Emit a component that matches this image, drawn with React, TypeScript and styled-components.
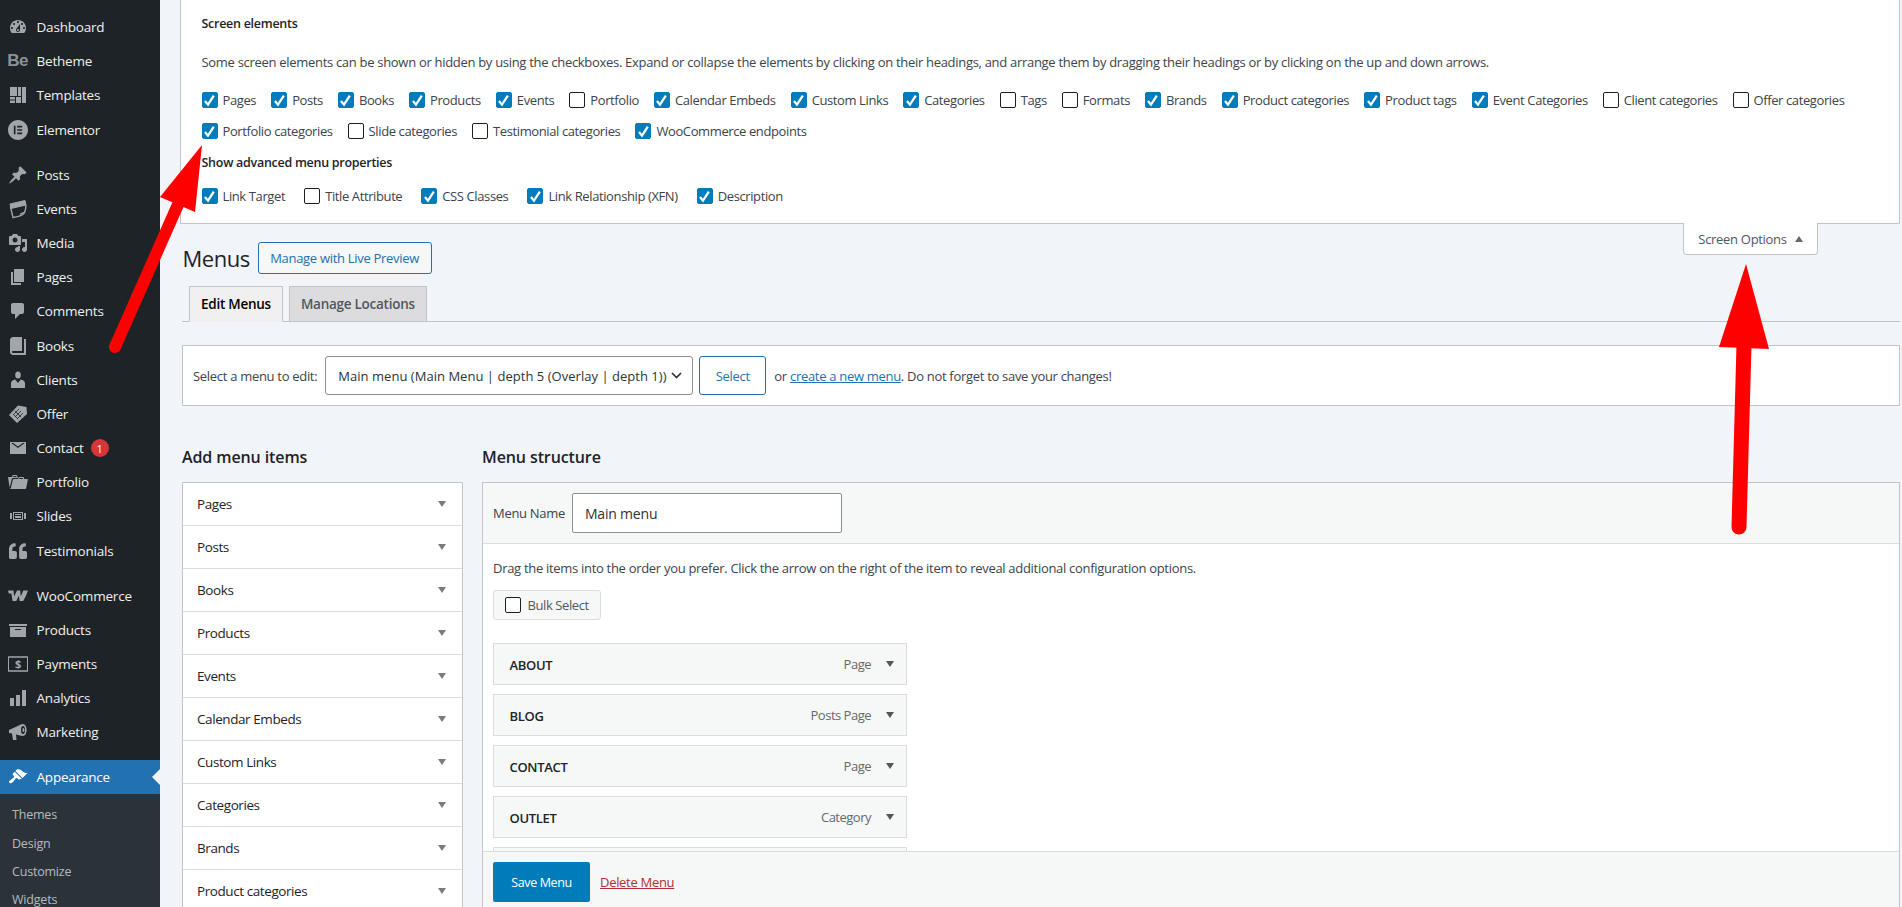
import React from 'react';
import styled, { createGlobalStyle } from 'styled-components';
import { FaQuoteLeft } from 'react-icons/fa';
import { SiElementor } from 'react-icons/si';

const Global = createGlobalStyle`
  html, body { margin: 0; padding: 0; height: 100%; overflow: hidden; }
  body { font-family: "Open Sans", "Noto Sans", sans-serif; font-size: 13px; color: #3c434a; background: #f1f4f8; }
  * { box-sizing: border-box; }
`;

const Page = styled.div`
  position: relative;
  display: flex;
  width: 1902px;
  height: 907px;
  overflow: hidden;
  background: #f1f4f8;
`;

const Sidebar = styled.nav`
  flex: 0 0 160px;
  width: 160px;
  background: #1d2327;
  padding-top: 10px;
  overflow: hidden;
`;

const Group = styled.div`
  margin-bottom: 10.75px;
`;

const MenuRow = styled.div<{ $active?: boolean }>`
  position: relative;
  display: flex;
  align-items: center;
  height: 34.2px;
  padding-left: 8px;
  font-size: 13.5px;
  letter-spacing: -0.2px;
  color: ${p => (p.$active ? '#fff' : '#f0f0f1')};
  background: ${p => (p.$active ? '#2271b1' : 'transparent')};
`;

const MenuIcon = styled.span<{ $active?: boolean }>`
  flex: 0 0 20px;
  width: 20px;
  height: 20px;
  margin-right: 8.5px;
  display: flex;
  align-items: center;
  justify-content: center;
  color: ${p => (p.$active ? '#fff' : '#a2a6ab')};
  svg { display: block; }
`;

const BeMark = styled.span`
  font-family: "Liberation Sans", Arial, sans-serif;
  font-weight: 700;
  font-size: 17px;
  letter-spacing: -0.6px;
  color: #8d9298;
  margin-left: -1px;
`;

const Badge = styled.span`
  display: inline-flex;
  align-items: center;
  justify-content: center;
  width: 18px;
  height: 18px;
  margin-left: 7px;
  border-radius: 50%;
  background: #d63638;
  color: #fff;
  font-size: 11px;
  letter-spacing: 0;
`;

const Notch = styled.span`
  position: absolute;
  right: 0;
  top: 50%;
  margin-top: -8px;
  border: 8px solid transparent;
  border-right-color: #f1f4f8;
  border-left-width: 0;
`;

const Submenu = styled.div`
  background: #2c3338;
  padding-top: 7px;
  height: 140px;
`;

const SubRow = styled.div`
  height: 28.3px;
  line-height: 28.3px;
  padding-left: 12px;
  font-size: 12.5px;
  letter-spacing: -0.2px;
  color: rgba(240, 246, 252, 0.7);
`;

const Main = styled.main`
  flex: 1;
  min-width: 0;
  padding: 0 2px 0 20px;
  font-size: 13px;
  letter-spacing: -0.3px;
`;

const OptionsPanel = styled.section`
  height: 224px;
  background: #fff;
  border: 1px solid #c3c4c7;
  border-top: 0;
  padding: 14px 20px 0 20.5px;
`;

const PanelHeading = styled.h5<{ $top?: number }>`
  margin: ${p => p.$top ?? 0}px 0 0;
  font-size: 12.5px;
  line-height: 20px;
  font-weight: 600;
  letter-spacing: -0.27px;
  color: #1d2327;
`;

const PanelText = styled.p`
  margin: 18px 0 0;
  line-height: 20px;
`;

const CheckRow = styled.div<{ $top: number; $gap: number }>`
  display: flex;
  align-items: center;
  gap: ${p => p.$gap}px;
  height: 20px;
  margin-top: ${p => p.$top}px;
  letter-spacing: -0.39px;
`;

const CheckItem = styled.label`
  display: flex;
  align-items: center;
  gap: 5px;
  white-space: nowrap;
`;

const Box = styled.span<{ $on?: boolean }>`
  flex: 0 0 16px;
  width: 16px;
  height: 16px;
  border-radius: 2px;
  display: flex;
  align-items: center;
  justify-content: center;
  background: ${p => (p.$on ? '#007cba' : '#fff')};
  border: 1px solid ${p => (p.$on ? '#007cba' : '#1e1e1e')};
`;

const ScreenLinks = styled.div`
  height: 0;
  display: flex;
  justify-content: flex-end;
  padding-right: 82px;
`;

const ScreenTab = styled.button`
  height: 32px;
  width: 135px;
  margin-top: -1px;
  display: flex;
  align-items: center;
  justify-content: center;
  gap: 8px;
  background: #fff;
  border: 1px solid #c3c4c7;
  border-top: 0;
  border-radius: 0 0 4px 4px;
  font: inherit;
  letter-spacing: -0.3px;
  color: #50575e;
  position: relative;
  z-index: 1;
`;

const TriUp = styled.span`
  border-left: 4px solid transparent;
  border-right: 4px solid transparent;
  border-bottom: 6px solid #646970;
`;

const HeadRow = styled.div`
  display: flex;
  align-items: center;
  gap: 8px;
  margin-top: 18px;
  padding-left: 2.5px;
`;

const Title = styled.h1`
  margin: 0;
  font-size: 22px;
  font-weight: 400;
  line-height: 32px;
  letter-spacing: -0.5px;
  color: #1d2327;
`;

const OutlineButton = styled.button<{ $w: number; $h: number; $white?: boolean }>`
  width: ${p => p.$w}px;
  height: ${p => p.$h}px;
  padding: 0;
  background: ${p => (p.$white ? '#fff' : '#f6f7f7')};
  border: 1px solid #2271b1;
  border-radius: 3px;
  color: #2271b1;
  font: inherit;
  letter-spacing: -0.3px;
`;

const Content = styled.div`
  margin-left: 2px;
`;

const TabBar = styled.div`
  display: flex;
  gap: 6px;
  height: 36px;
  margin-top: 12px;
  padding-left: 7px;
  border-bottom: 1px solid #c3c4c7;
`;

const Tab = styled.div<{ $active?: boolean }>`
  height: 36px;
  display: flex;
  align-items: center;
  padding: 0 11px;
  border: 1px solid #c3c4c7;
  border-bottom-color: ${p => (p.$active ? '#f0f0f1' : '#c3c4c7')};
  background: ${p => (p.$active ? '#f0f0f1' : '#dcdcde')};
  font-size: 13.5px;
  font-weight: 600;
  letter-spacing: -0.26px;
  color: ${p => (p.$active ? '#000' : '#50575e')};
`;

const SelectBar = styled.div`
  display: flex;
  align-items: center;
  height: 61px;
  margin-top: 23px;
  padding: 0 10px;
  background: #fff;
  border: 1px solid #c3c4c7;
`;

const FakeSelect = styled.div`
  width: 368px;
  height: 39px;
  margin: 0 6px 0 8px;
  padding: 0 10px 0 12px;
  display: flex;
  align-items: center;
  justify-content: space-between;
  background: #fff;
  border: 1px solid #8c8f94;
  border-radius: 3px;
  font-size: 13px;
  letter-spacing: 0.03px;
  color: #2c3338;
  white-space: nowrap;
`;

const BarNote = styled.span`
  margin-left: 8px;
`;

const Link = styled.a<{ $danger?: boolean }>`
  color: ${p => (p.$danger ? '#b32d2e' : '#2271b1')};
  text-decoration: underline;
`;

const Columns = styled.div`
  display: grid;
  grid-template-columns: 281px 1fr;
  column-gap: 19px;
  margin-top: 41px;
`;

const ColTitle = styled.h2`
  margin: 0 0 15px;
  height: 20px;
  font-size: 16px;
  line-height: 20px;
  font-weight: 600;
  letter-spacing: -0.1px;
  color: #1d2327;
`;

const Accordion = styled.div`
  background: #fff;
  border: 1px solid #c3c4c7;
  border-bottom: 0;
`;

const AccRow = styled.div`
  display: flex;
  align-items: center;
  justify-content: space-between;
  height: 43px;
  padding: 0 16px 0 14px;
  border-bottom: 1px solid #dcdcde;
  font-size: 13.5px;
  font-weight: 500;
  letter-spacing: -0.42px;
  color: #1d2327;
`;

const TriDown = styled.span<{ $dark?: boolean }>`
  border-left: 4px solid transparent;
  border-right: 4px solid transparent;
  border-top: 6px solid ${p => (p.$dark ? '#50575e' : '#787c82')};
`;

const MenuBox = styled.div`
  height: 430px;
  display: flex;
  flex-direction: column;
  background: #fff;
  border: 1px solid #c3c4c7;
  border-bottom: 0;
`;

const BoxHeader = styled.div`
  flex: 0 0 61px;
  display: flex;
  align-items: flex-start;
  padding: 10px 10px 0;
  gap: 7px;
  background: #f6f7f7;
  border-bottom: 1px solid #dcdcde;
`;

const NameLabel = styled.span`
  line-height: 40px;
`;

const NameInput = styled.input`
  width: 270px;
  height: 40px;
  padding: 0 12px;
  background: #fff;
  border: 1px solid #8c8f94;
  border-radius: 2px;
  font: inherit;
  font-size: 14px;
  letter-spacing: -0.2px;
  color: #2c3338;
  outline: none;
`;

const BoxBody = styled.div`
  flex: 0 0 307px;
  height: 307px;
  overflow: hidden;
  padding: 14px 10px 0;
`;

const BodyText = styled.p`
  margin: 0;
  line-height: 20px;
`;

const BulkButton = styled.div`
  display: flex;
  align-items: center;
  gap: 7px;
  width: 108px;
  height: 30px;
  margin: 12px 0 23px;
  padding-left: 10.5px;
  background: #f6f7f7;
  border: 1px solid #dcdcde;
  border-radius: 3px;
  letter-spacing: -0.4px;
  color: #50575e;
`;

const ItemBar = styled.div`
  display: flex;
  align-items: center;
  width: 414px;
  height: 42px;
  margin-bottom: 9px;
  padding: 0 12px 0 15.5px;
  background: #f6f7f7;
  border: 1px solid #dcdcde;
`;

const ItemTitle = styled.span`
  flex: 1;
  font-weight: 600;
  padding-top: 2px;
  color: #1d2327;
`;

const ItemType = styled.span`
  margin-right: 15px;
  letter-spacing: -0.5px;
  color: #646970;
`;

const BoxFooter = styled.div`
  flex: 1;
  display: flex;
  align-items: flex-start;
  gap: 10px;
  padding: 10px 10px 0;
  background: #f6f7f7;
  border-top: 1px solid #dcdcde;
`;

const SaveButton = styled.button`
  width: 97px;
  height: 40px;
  padding: 0;
  background: #007cba;
  border: 0;
  border-radius: 2px;
  color: #fff;
  font: inherit;
  font-size: 12.5px;
  letter-spacing: -0.38px;
`;

const DeleteWrap = styled.span`
  line-height: 40px;
`;

const Overlay = styled.svg`
  position: absolute;
  inset: 0;
  pointer-events: none;
`;

const I = ({ d, s = 20 }: { d: string; s?: number }) => (
  <svg width={s} height={s} viewBox="0 0 20 20" fill="currentColor"><path d={d} /></svg>
);

const GaugeIcon = () => <I d="M3.76 16h12.48c1.1-1.37 1.76-3.11 1.76-5 0-4.42-3.58-8-8-8s-8 3.58-8 8c0 1.89.66 3.63 1.76 5zM10 4c.55 0 1 .45 1 1s-.45 1-1 1-1-.45-1-1 .45-1 1-1zM6 6c.55 0 1 .45 1 1s-.45 1-1 1-1-.45-1-1 .45-1 1-1zm8 0c.55 0 1 .45 1 1s-.45 1-1 1-1-.45-1-1 .45-1 1-1zm-5.37 5.55L12 7v6c0 1.1-.9 2-2 2s-2-.9-2-2c0-.57.24-1.08.63-1.45zM4 10c.55 0 1 .45 1 1s-.45 1-1 1-1-.45-1-1 .45-1 1-1zm12 0c.55 0 1 .45 1 1s-.45 1-1 1-1-.45-1-1 .45-1 1-1zm-5 3c0-.55-.45-1-1-1s-1 .45-1 1 .45 1 1 1 1-.45 1-1z" />;
const TemplatesIcon = () => <I d="M2 2h7v9H2zM10 2h3v9h-3zM14 2h4v16h-4zM2 12h5v2.5H2zM2 15.5h5V18H2zM8 12h5v6H8z" />;
const PinIcon = () => <I d="M10.44 3.02l1.82-1.82 6.36 6.35-1.83 1.82c-1.05-.68-2.48-.57-3.41.36l-.75.75c-.92.93-1.04 2.35-.35 3.41l-1.83 1.82-2.41-2.41-2.8 2.79c-.42.42-3.38 2.71-3.8 2.29s1.86-3.39 2.28-3.81l2.79-2.79L4.1 9.36l1.83-1.82c1.05.69 2.48.57 3.4-.36l.75-.75c.93-.92 1.05-2.35.36-3.41z" />;
const EventsIcon = () => (
  <svg width="20" height="20" viewBox="0 0 20 20" fill="none" stroke="currentColor">
    <path d="M2 5 L17 1.5 L18 6 L3 9.5 Z" fill="currentColor" strokeWidth="1" />
    <path d="M2.5 8 L5 18.5 C9 18 13 17 15.5 15 C17 13.5 17.8 10 18 6" strokeWidth="1.4" />
    <path d="M12 15.5 C13 14.5 15 14 17 13" strokeWidth="1.2" />
  </svg>
);
const MediaIcon = () => <I d="M13 11V4c0-.55-.45-1-1-1h-1.67L9 1H5L3.67 3H2c-.55 0-1 .45-1 1v7c0 .55.45 1 1 1h10c.55 0 1-.45 1-1zM7 4.5c1.38 0 2.5 1.12 2.5 2.5S8.38 9.5 7 9.5 4.5 8.38 4.5 7 5.62 4.5 7 4.5zM14 6h5v10.5c0 1.38-1.12 2.5-2.5 2.5S14 17.88 14 16.5s1.12-2.5 2.5-2.5c.17 0 .34.02.5.05V9h-3V6zm-4 8.05V13h2v3.5c0 1.38-1.12 2.5-2.5 2.5S7 17.88 7 16.5 8.12 14 9.5 14c.17 0 .34.02.5.05z" />;
const PageIcon = () => <I d="M6 15V2h10v13H6zm-1 1h8v2H3V5h2v11z" />;
const CommentIcon = () => <I d="M5 2h9c1.1 0 2 .9 2 2v7c0 1.1-.9 2-2 2h-2l-5 5v-5H5c-1.1 0-2-.9-2-2V4c0-1.1.9-2 2-2z" />;
const BookIcon = () => <I d="M16 3h2v16H5c-1.66 0-3-1.34-3-3V4c0-1.66 1.34-3 3-3h9v14H5c-.55 0-1 .45-1 1s.45 1 1 1h11V3z" />;
const ClientIcon = () => (
  <svg width="20" height="20" viewBox="0 0 20 20" fill="currentColor">
    <ellipse cx="10" cy="5" rx="2.8" ry="3.6" />
    <path d="M3 18v-4.5C3 11 5 9.8 7.2 9.5L10 13l2.8-3.5c2.2.3 4.2 1.5 4.2 4V18z" />
  </svg>
);
const OfferIcon = () => (
  <svg width="20" height="20" viewBox="0 0 20 20">
    <path d="M1 11 L10 1.5 L18.5 3 L19 10 L9 19 Z" fill="currentColor" />
    <path d="M5 11 L11 5 M7 13 L13 7 M9 15 L15 9 M7 7 L13 13 M5 10 L10 15" stroke="#1d2327" strokeWidth="0.8" />
  </svg>
);
const MailIcon = () => <I d="M2 4h16v12H2zM3.2 5l6.8 5 6.8-5h-1.9L10 8.4 5.1 5z" />;
const FolderIcon = () => <I d="M4 5H.78c-.37 0-.74.32-.69.84l1.56 9.99S3.5 8.47 3.86 6.7c.11-.53.61-.7.98-.7H10s-.7-2.08-.77-2.31C9.11 3.25 8.89 3 8.45 3H5.14c-.36 0-.7.23-.8.64C4.25 4.04 4 5 4 5zm4.88 0h-4s.42-1 .87-1h2.13c.48 0 1 1 1 1zM2.67 16.25c-.31.47-.76.75-1.26.75h15.73c.54 0 .92-.31 1.03-.83.44-2.19 1.68-8.44 1.68-8.44.07-.5-.3-.73-.62-.73H16V5.53c0-.16-.26-.53-.66-.53h-3.76c-.52 0-.87.58-.87.58L10 7H5.59c-.32 0-.63.19-.69.5 0 0-1.59 6.7-1.72 7.33-.07.37-.22.99-.51 1.42zM15.01 7h-4l.37-.68s.26-.32.55-.32h2.42c.32 0 .66.5.66.5z" />;
const SlidesIcon = () => <I d="M5 14V6h10v8H5zm-3-1V7h2v6H2zm4-6v6h8V7H6zm10 0h2v6h-2V7zm-3 2V8H7v1h6zm0 3v-2H7v2h6z" />;
const WooIcon = () => (
  <svg width="20" height="20" viewBox="0 0 20 20" fill="currentColor">
    <path d="M0 4.5h5.5l.6 6 2.9-6h3.2l.5 6 2.6-6h4.7c-1.3 3.6-3.2 8-4.8 10.5h-3.6l-.7-5.3-2.6 5.3H4.6L3.4 7.5H0.8z" />
  </svg>
);
const ArchiveIcon = () => <I d="M19 4v2H1V4h18zM2 7h16v10H2V7zm11 3V9H7v1h6z" />;
const PaymentIcon = () => (
  <svg width="20" height="20" viewBox="0 0 20 20" fill="none">
    <rect x="0.2" y="3" width="19.6" height="14" rx="1" stroke="currentColor" strokeWidth="1.6" />
    <text x="10" y="14.4" textAnchor="middle" fontFamily="Open Sans" fontWeight="700" fontSize="11" fill="currentColor">$</text>
  </svg>
);
const BarsIcon = () => <I d="M18 18V2h-4v16h4zm-6 0V7H8v11h4zm-6 0v-8H2v8h4z" />;
const MegaIcon = () => (
  <svg width="20" height="20" viewBox="0 0 20 20">
    <path d="M1 8 L14 2 V14 L8 12.5 L8.5 18 H5 L4 11.5 L1 11 Z" fill="currentColor" />
    <ellipse cx="15" cy="8" rx="3.6" ry="6" fill="currentColor" />
    <ellipse cx="15" cy="8" rx="2" ry="4" fill="#1d2327" />
    <ellipse cx="15.4" cy="8" rx="1" ry="2" fill="currentColor" />
  </svg>
);
const BrushIcon = () => <I d="M14.48 11.06L7.41 3.99l1.5-1.5c.5-.56 2.3-.47 3.51.32 1.21.8 1.43 1.28 2.91 2.1 1.18.64 2.45 1.26 4.45.85zm-.71.71L6.7 4.7 4.93 6.47c-.39.39-.39 1.02 0 1.41l1.06 1.06c.39.39.39 1.03 0 1.42-.6.6-1.43 1.11-2.21 1.69-.35.26-.7.53-1.01.84C1.43 13.23.4 14.85 1.4 15.85c.99 1 2.62-.03 3.97-1.38.31-.31.58-.66.84-1.01.58-.78 1.09-1.61 1.69-2.21.39-.39 1.02-.39 1.41 0l1.06 1.06c.39.39 1.02.39 1.41 0z" />;

type Item = { label: string; icon: React.ReactNode; badge?: string };
const groups: Item[][] = [
  [
    { label: 'Dashboard', icon: <GaugeIcon /> },
    { label: 'Betheme', icon: <BeMark>Be</BeMark> },
    { label: 'Templates', icon: <TemplatesIcon /> },
    { label: 'Elementor', icon: <SiElementor size={20} /> },
  ],
  [
    { label: 'Posts', icon: <PinIcon /> },
    { label: 'Events', icon: <EventsIcon /> },
    { label: 'Media', icon: <MediaIcon /> },
    { label: 'Pages', icon: <PageIcon /> },
    { label: 'Comments', icon: <CommentIcon /> },
    { label: 'Books', icon: <BookIcon /> },
    { label: 'Clients', icon: <ClientIcon /> },
    { label: 'Offer', icon: <OfferIcon /> },
    { label: 'Contact', icon: <MailIcon />, badge: '1' },
    { label: 'Portfolio', icon: <FolderIcon /> },
    { label: 'Slides', icon: <SlidesIcon /> },
    { label: 'Testimonials', icon: <FaQuoteLeft size={18} /> },
  ],
  [
    { label: 'WooCommerce', icon: <WooIcon /> },
    { label: 'Products', icon: <ArchiveIcon /> },
    { label: 'Payments', icon: <PaymentIcon /> },
    { label: 'Analytics', icon: <BarsIcon /> },
    { label: 'Marketing', icon: <MegaIcon /> },
  ],
];

const row1: [string, boolean][] = [
  ['Pages', true], ['Posts', true], ['Books', true], ['Products', true], ['Events', true], ['Portfolio', false],
  ['Calendar Embeds', true], ['Custom Links', true], ['Categories', true], ['Tags', false], ['Formats', false],
  ['Brands', true], ['Product categories', true], ['Product tags', true], ['Event Categories', true],
  ['Client categories', false], ['Offer categories', false],
];
const row2: [string, boolean][] = [
  ['Portfolio categories', true], ['Slide categories', false], ['Testimonial categories', false], ['WooCommerce endpoints', true],
];
const row3: [string, boolean][] = [
  ['Link Target', true], ['Title Attribute', false], ['CSS Classes', true], ['Link Relationship (XFN)', true], ['Description', true],
];

const accordion = ['Pages', 'Posts', 'Books', 'Products', 'Events', 'Calendar Embeds', 'Custom Links', 'Categories', 'Brands', 'Product categories'];
const menuItems = [
  ['ABOUT', 'Page'], ['BLOG', 'Posts Page'], ['CONTACT', 'Page'], ['OUTLET', 'Category'], ['', ''],
];

const Check = ({ on }: { on?: boolean }) => (
  <Box $on={on}>
    {on && (
      <svg width="13" height="13" viewBox="0 0 12 12" fill="none">
        <path d="M1.8 6.4 L4.6 9.8 L10 1.6" stroke="#fff" strokeWidth="2.1" />
      </svg>
    )}
  </Box>
);

const Checks = ({ items, top, gap = 15 }: { items: [string, boolean][]; top: number; gap?: number }) => (
  <CheckRow $top={top} $gap={gap}>
    {items.map(([label, on]) => (
      <CheckItem key={label}><Check on={on} />{label}</CheckItem>
    ))}
  </CheckRow>
);

export default function App() {
  return (
    <Page>
      <Global />
      <Sidebar>
        {groups.map((g, i) => (
          <Group key={i}>
            {g.map(it => (
              <MenuRow key={it.label}>
                <MenuIcon>{it.icon}</MenuIcon>
                {it.label}
                {it.badge && <Badge>{it.badge}</Badge>}
              </MenuRow>
            ))}
          </Group>
        ))}
        <MenuRow $active>
          <MenuIcon $active><BrushIcon /></MenuIcon>
          Appearance
          <Notch />
        </MenuRow>
        <Submenu>
          {['Themes', 'Design', 'Customize', 'Widgets'].map(s => <SubRow key={s}>{s}</SubRow>)}
        </Submenu>
      </Sidebar>
      <Main>
        <OptionsPanel>
          <PanelHeading>Screen elements</PanelHeading>
          <PanelText>Some screen elements can be shown or hidden by using the checkboxes. Expand or collapse the elements by clicking on their headings, and arrange them by dragging their headings or by clicking on the up and down arrows.</PanelText>
          <Checks items={row1} top={18} />
          <Checks items={row2} top={11} />
          <PanelHeading $top={12}>Show advanced menu properties</PanelHeading>
          <Checks items={row3} top={13} gap={19} />
        </OptionsPanel>
        <ScreenLinks>
          <ScreenTab>Screen Options <TriUp /></ScreenTab>
        </ScreenLinks>
        <HeadRow>
          <Title>Menus</Title>
          <OutlineButton $w={174} $h={32}>Manage with Live Preview</OutlineButton>
        </HeadRow>
        <Content>
          <TabBar>
            <Tab $active>Edit Menus</Tab>
            <Tab>Manage Locations</Tab>
          </TabBar>
          <SelectBar>
            Select a menu to edit:
            <FakeSelect>
              Main menu (Main Menu | depth 5 (Overlay | depth 1))
              <svg width="11" height="7" viewBox="0 0 11 7" fill="none"><path d="M1 1 L5.5 5.5 L10 1" stroke="#2c3338" strokeWidth="1.7" /></svg>
            </FakeSelect>
            <OutlineButton $w={67} $h={39} $white>Select</OutlineButton>
            <BarNote>or <Link>create a new menu</Link>. Do not forget to save your changes!</BarNote>
          </SelectBar>
          <Columns>
            <div>
              <ColTitle>Add menu items</ColTitle>
              <Accordion>
                {accordion.map(a => <AccRow key={a}>{a}<TriDown /></AccRow>)}
              </Accordion>
            </div>
            <div>
              <ColTitle>Menu structure</ColTitle>
              <MenuBox>
                <BoxHeader>
                  <NameLabel>Menu Name</NameLabel>
                  <NameInput readOnly value="Main menu" />
                </BoxHeader>
                <BoxBody>
                  <BodyText>Drag the items into the order you prefer. Click the arrow on the right of the item to reveal additional configuration options.</BodyText>
                  <BulkButton><Check />Bulk Select</BulkButton>
                  {menuItems.map(([t, k], i) => (
                    <ItemBar key={i}>
                      <ItemTitle>{t}</ItemTitle>
                      <ItemType>{k}</ItemType>
                      <TriDown $dark />
                    </ItemBar>
                  ))}
                </BoxBody>
                <BoxFooter>
                  <SaveButton>Save Menu</SaveButton>
                  <DeleteWrap><Link $danger>Delete Menu</Link></DeleteWrap>
                </BoxFooter>
              </MenuBox>
            </div>
          </Columns>
        </Content>
      </Main>
      <Overlay width="1902" height="907" viewBox="0 0 1902 907">
        <polygon points="202,145 160,197 195,212" fill="#ff0000" />
        <line x1="180" y1="200" x2="115" y2="347" stroke="#ff0000" strokeWidth="12" strokeLinecap="round" />
        <polygon points="1746,264 1719,347 1769,349" fill="#ff0000" />
        <line x1="1744" y1="345" x2="1739" y2="527" stroke="#ff0000" strokeWidth="15" strokeLinecap="round" />
      </Overlay>
    </Page>
  );
}
